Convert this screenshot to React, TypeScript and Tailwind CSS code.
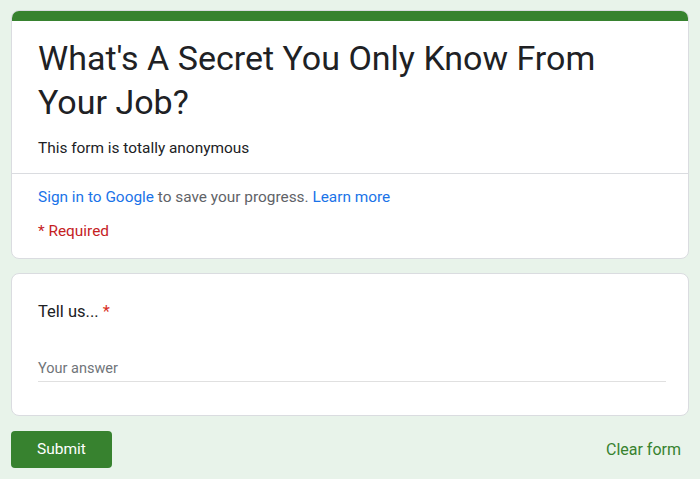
import React from 'react';

const font = { fontFamily: 'Roboto, "Liberation Sans", Arial, sans-serif' };

export default function App() {
    return (
        <div className="min-h-[479px] bg-[#e8f3ea] px-[11px] pt-[10px]" style={font}>
            {/* header card */}
            <div className="bg-white rounded-lg border border-[#dadce0] overflow-hidden">
                <div className="h-[10px] bg-[#37822f]"></div>
                <div className="px-[26px] pt-[15px] pb-[15px]">
                    <h1 className="max-w-[610px] text-[34px] leading-[44px] text-[#202124]">
                        What's A Secret You Only Know From Your Job?
                    </h1>
                    <p className="mt-[14px] text-[15.4px] leading-[20px] text-[#202124]">
                        This form is totally anonymous
                    </p>
                </div>
                <div className="border-t border-[#dadce0] px-[26px] pt-[13px] pb-[17px]">
                    <p className="text-[15.4px] leading-[20px] text-[#5f6368]">
                        <span className="text-[#1a73e8]">Sign in to Google</span> to save your progress.{' '}
                        <span className="text-[#1a73e8]">Learn more</span>
                    </p>
                    <p className="mt-[14px] text-[15.4px] leading-[20px] text-[#c5221f]">* Required</p>
                </div>
            </div>

            {/* question card */}
            <div className="mt-[14px] bg-white rounded-lg border border-[#dadce0] px-[26px] pt-[26px] pb-[33px]">
                <p className="text-[16.5px] leading-[24px] text-[#202124]">
                    Tell us... <span className="text-[#d93025]">*</span>
                </p>
                <div className="mt-[32px] w-[628px] border-b border-[#e0e0e0] pb-[1px]">
                    <span className="text-[14.5px] leading-[20px] text-[#70757a]">Your answer</span>
                </div>
            </div>

            {/* actions */}
            <div className="mt-[15px] flex items-center justify-between">
                <button className="w-[101px] h-[37px] rounded bg-[#37822f] text-white text-[15.5px]">
                    Submit
                </button>
                <span className="mr-[8px] text-[16px] text-[#37822f]">Clear form</span>
            </div>
        </div>
    );
}
